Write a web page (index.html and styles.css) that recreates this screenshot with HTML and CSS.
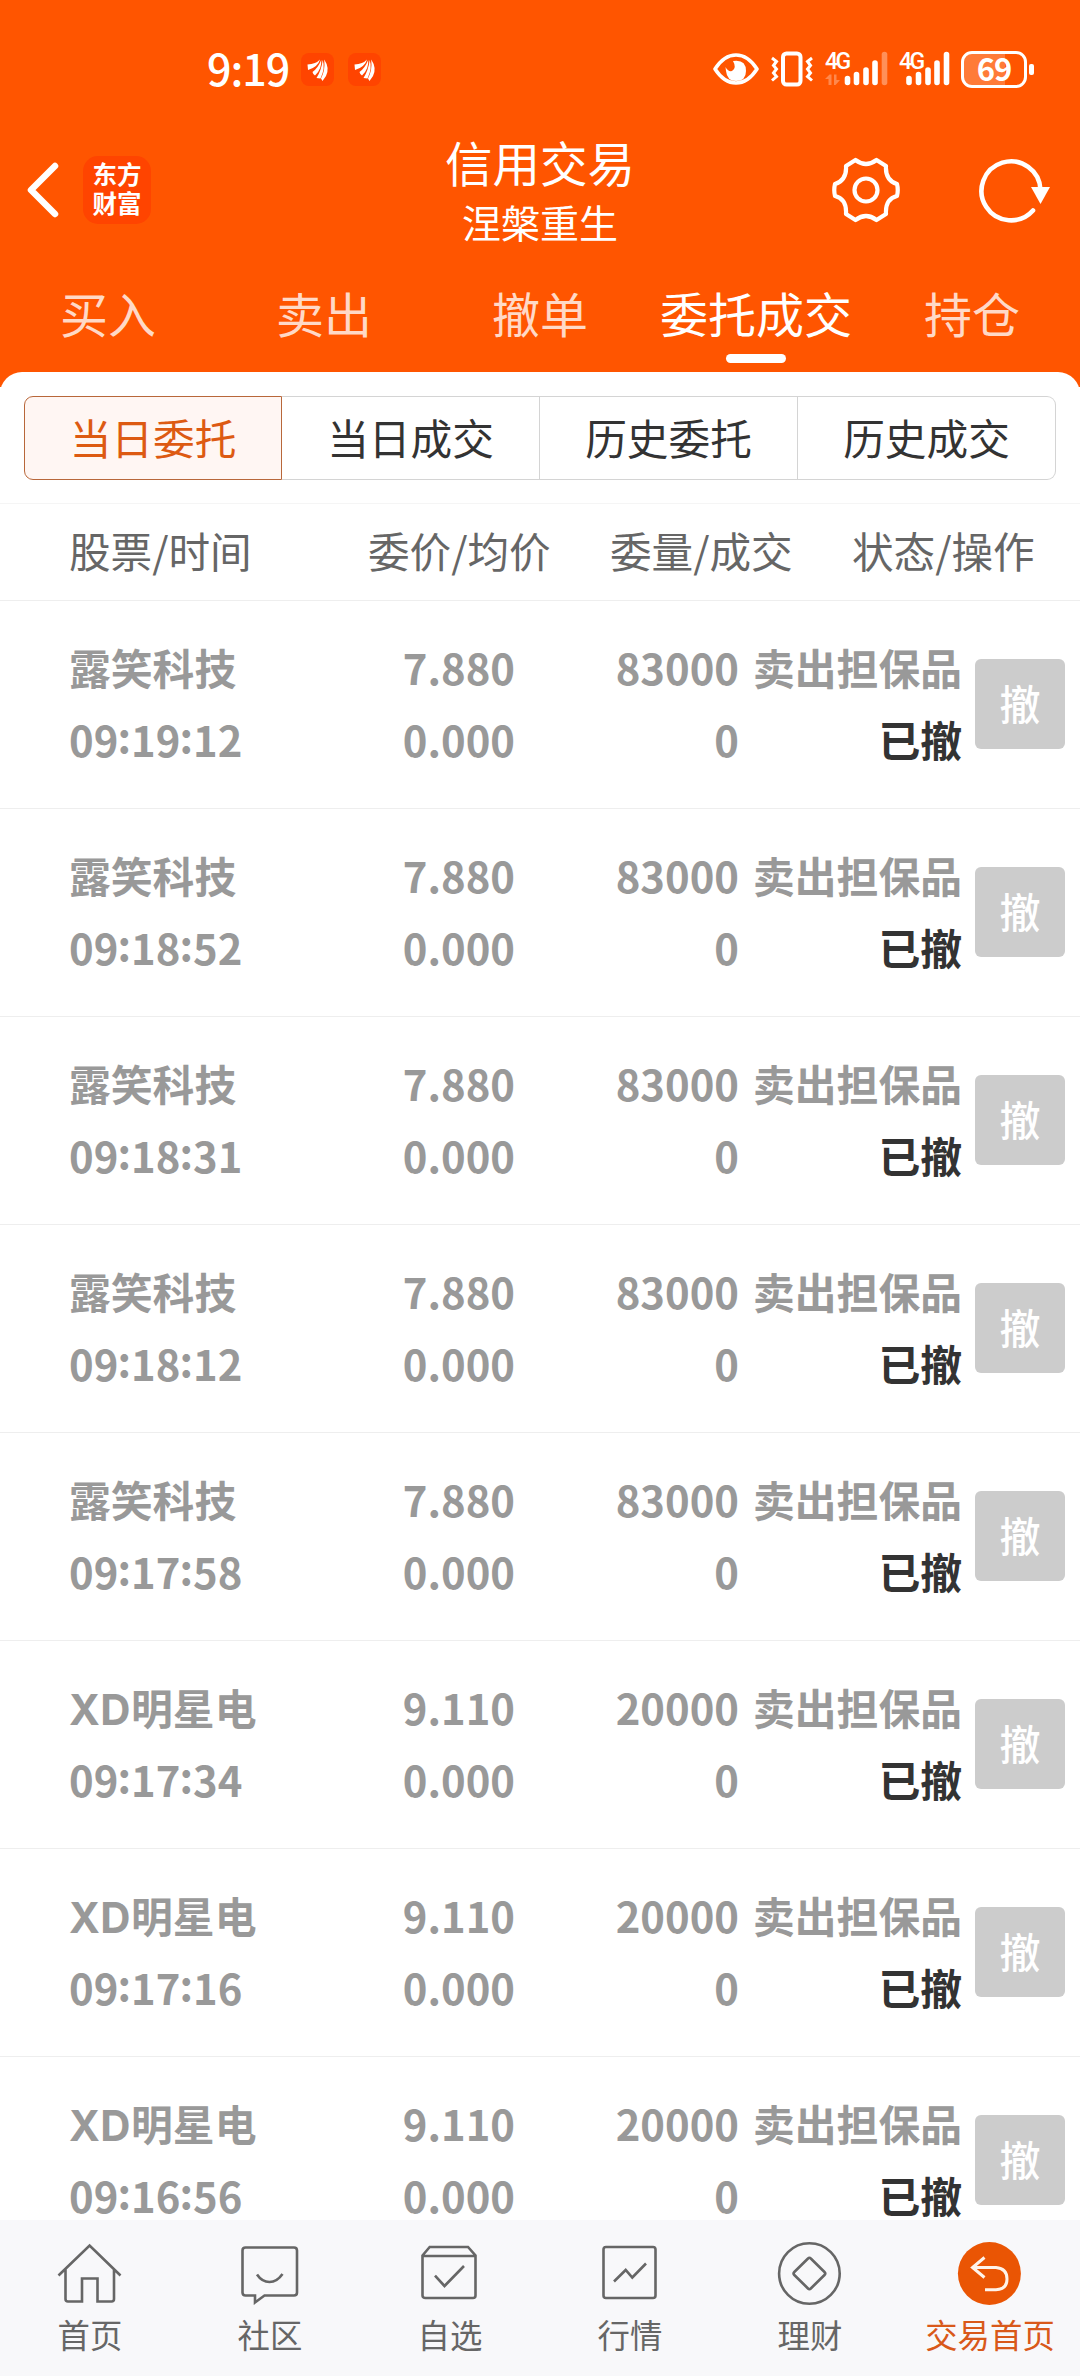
FILE: index.html
```html
<!DOCTYPE html>
<html lang="zh-CN">
<head>
    <meta charset="UTF-8">
    <meta name="viewport" content="width=device-width, initial-scale=1.0">
    <title>信用交易</title>
    <link rel="stylesheet" href="styles.css">
</head>
<body>
    <div class="app">
        <header class="header">
            <div class="status-bar">
                <div class="status-left">
                    <span class="clock">9:19</span>
                    <svg class="notice" width="33" height="33" viewBox="0 0 33 33">
                        <rect width="33" height="33" rx="8" fill="#ff4400"/>
                        <path d="M6.500 11.500Q15 11 19 6.500Q17 14 7 17ZM11.500 19Q17 15 20.200 7Q21 16 14 22.500Q12 21.500 11.500 19ZM15.500 25Q20.500 17 21.700 7Q24.500 15 19.500 25.500ZM23.200 6.500Q29 15 25 23L21.500 28L20 25.500Q24.500 17 23.200 6.500Z" fill="#fff"/>
                    </svg>
                    <svg class="notice" width="33" height="33" viewBox="0 0 33 33">
                        <rect width="33" height="33" rx="8" fill="#ff4400"/>
                        <path d="M6.500 11.500Q15 11 19 6.500Q17 14 7 17ZM11.500 19Q17 15 20.200 7Q21 16 14 22.500Q12 21.500 11.500 19ZM15.500 25Q20.500 17 21.700 7Q24.500 15 19.500 25.500ZM23.200 6.500Q29 15 25 23L21.500 28L20 25.500Q24.500 17 23.200 6.500Z" fill="#fff"/>
                    </svg>
                </div>
                <div class="status-right">
                    <svg class="eye" width="46" height="32" viewBox="0 0 46 32">
                        <path d="M2 16Q11 2 23 2T44 16Q35 30 23 30T2 16Z" fill="none" stroke="#fff" stroke-width="3.600" stroke-linejoin="round"/>
                        <path d="M20 8Q33 6 33 18Q33 28 23 28Q14 28 13 18L12.500 14Q15 19 19 18Q24 15 20 8Z" fill="#fff"/>
                    </svg>
                    <svg class="vibrate" width="42" height="36" viewBox="0 0 42 36" fill="none" stroke="#fff">
                        <rect x="12" y="2.500" width="17.500" height="31" rx="3.500" stroke-width="4"/>
                        <path d="M1 7L5.500 10.500L2.500 14.500L5.500 18L2.500 22L5.500 25.500L1 29.500M41 7L36.500 10.500L39.500 14.500L36.500 18L39.500 22L36.500 25.500L41 29.500" stroke-width="3"/>
                    </svg>
                    <div class="signal">
                        <span class="net">4G</span>
                        <svg width="64" height="36" viewBox="0 0 64 36" stroke="#fff" stroke-width="5.600" stroke-linecap="round">
                            <path d="M22.500 27.500V31.500M31.500 23.500V31.500M41 19V31.500M50 12V31.500"/>
                            <path d="M59.500 3.500V31.500" opacity=".35"/>
                            <path d="M0 28L4.500 23.500H6.500V34H3.500V28ZM9 23.500H11.500V29H15L10.500 34H9Z" fill="#fff" stroke="none" opacity=".3"/>
                        </svg>
                    </div>
                    <div class="signal">
                        <span class="net">4G</span>
                        <svg width="52" height="36" viewBox="0 0 52 36" stroke="#fff" stroke-width="5.600" stroke-linecap="round">
                            <path d="M10 27.500V31.500M19.500 23.500V31.500M29 19V31.500M38 12V31.500M47.500 3.500V31.500"/>
                        </svg>
                    </div>
                    <div class="battery"><span>69</span></div>
                    <div class="battery-cap"></div>
                </div>
            </div>

            <div class="title-bar">
                <div class="title-left">
                    <svg width="32" height="56" viewBox="0 0 32 56">
                        <path d="M28 4L4 28L28 52" fill="none" stroke="#fff" stroke-width="6.500" stroke-linecap="round" stroke-linejoin="round"/>
                    </svg>
                    <div class="brand">东方<br>财富</div>
                </div>
                <div class="title">
                    <h1>信用交易</h1>
                    <p>涅槃重生</p>
                </div>
                <div class="title-right">
                    <svg width="68" height="66" viewBox="0 0 68 66" fill="none" stroke="#fff" stroke-width="4.200" stroke-linejoin="round">
                        <path d="M23.500 3Q34 11 44.500 3L54 9Q53 23 65 27Q66.500 33 65 39Q53 42 54 57L44.500 63Q34 55 23.500 63L14 57Q15 42 3 39Q1.500 33 3 27Q15 23 14 9Z"/>
                        <circle cx="34" cy="33" r="11.500"/>
                    </svg>
                    <svg width="72" height="66" viewBox="0 0 72 66">
                        <path d="M61.500 33A29.500 29.500 0 1 0 54 53.500" fill="none" stroke="#fff" stroke-width="4.600" stroke-linecap="round"/>
                        <path d="M52 30H71L61.500 47Z" fill="#fff"/>
                    </svg>
                </div>
            </div>

            <nav class="tabs">
                <a class="tab">买入</a>
                <a class="tab">卖出</a>
                <a class="tab">撤单</a>
                <a class="tab active">委托成交</a>
                <a class="tab">持仓</a>
            </nav>
        </header>

        <main class="panel">
            <div class="segments">
                <div class="segment active">当日委托</div>
                <div class="segment">当日成交</div>
                <div class="segment">历史委托</div>
                <div class="segment">历史成交</div>
            </div>
            <div class="table-head">
                <span>股票/时间</span>
                <span>委价/均价</span>
                <span>委量/成交</span>
                <span>状态/操作</span>
            </div>
            <div id="orders" class="orders"></div>
        </main>

        <footer class="bottom-nav">
            <a class="nav-item">
                <svg class="nav-icon" viewBox="0 0 66 66">
                    <path d="M1.500 34.500L32.600 4.500L63.500 34.500M8.500 28V58Q8.500 60.500 11 60.500H25V37.500H40.500V60.500H54.500Q57 60.500 57 58V28"/>
                </svg>
                <span>首页</span>
            </a>
            <a class="nav-item">
                <svg class="nav-icon" viewBox="0 0 66 66">
                    <path d="M8.500 6.500H57Q60 6.500 60 9.500V51.500Q60 54.500 57 54.500H27.500L18 61.500V54.500H8.500Q5.500 54.500 5.500 51.500V9.500Q5.500 6.500 8.500 6.500ZM20 33.500Q25 41 32.500 41T45.500 33"/>
                </svg>
                <span>社区</span>
            </a>
            <a class="nav-item">
                <svg class="nav-icon" viewBox="0 0 66 66">
                    <path d="M5.500 14.500L12.700 6H51L58.500 14.500V54.500Q58.500 57 56 57H8.500Q5.500 57 5.500 54.500ZM5.500 15H58.500M18 34.600L27.500 45L47 25"/>
                </svg>
                <span>自选</span>
            </a>
            <a class="nav-item">
                <svg class="nav-icon" viewBox="0 0 66 66">
                    <rect x="6.500" y="6" width="52" height="51" rx="2.500"/>
                    <path d="M17 40.500L28.700 29L35.300 36.500L49 22.500"/>
                </svg>
                <span>行情</span>
            </a>
            <a class="nav-item">
                <svg class="nav-icon" viewBox="0 0 66 66">
                    <circle cx="32.400" cy="32.500" r="30.300"/>
                    <path d="M31 17.500Q32.400 16 33.800 17.500L47.500 31Q49 32.500 47.500 34L33.800 47.500Q32.400 49 31 47.500L17.300 34Q15.800 32.500 17.300 31Z"/>
                </svg>
                <span>理财</span>
            </a>
            <a class="nav-item active">
                <svg class="nav-icon" viewBox="0 0 66 66">
                    <circle class="disc" cx="32.400" cy="32.500" r="31.500"/>
                    <path d="M27.500 16.500L15.500 26.500L27.500 36.500M16 26.500H39Q50 27.500 50 38T39 48.700H28"/>
                </svg>
                <span>交易首页</span>
            </a>
        </footer>
    </div>

    <script>
        const orders = [
            { name: '露笑科技', time: '09:19:12', price: '7.880', qty: 83000 },
            { name: '露笑科技', time: '09:18:52', price: '7.880', qty: 83000 },
            { name: '露笑科技', time: '09:18:31', price: '7.880', qty: 83000 },
            { name: '露笑科技', time: '09:18:12', price: '7.880', qty: 83000 },
            { name: '露笑科技', time: '09:17:58', price: '7.880', qty: 83000 },
            { name: 'XD明星电', time: '09:17:34', price: '9.110', qty: 20000 },
            { name: 'XD明星电', time: '09:17:16', price: '9.110', qty: 20000 },
            { name: 'XD明星电', time: '09:16:56', price: '9.110', qty: 20000 }
        ];

        document.getElementById('orders').innerHTML = orders.map(o => `
            <div class="order">
                <div class="col stock"><span>${o.name.replace('XD', '<b class="xd">XD</b>')}</span><span class="time">${o.time.replace(/:/g, '<i>:</i>')}</span></div>
                <div class="col price"><span>${o.price}</span><span>0.000</span></div>
                <div class="col qty"><span>${o.qty}</span><span>0</span></div>
                <div class="col state"><span>卖出担保品</span><span class="done">已撤</span></div>
                <button class="cancel">撤</button>
            </div>`).join('');
    </script>
</body>
</html>
```

FILE: styles.css
```css
* {
    box-sizing: border-box;
}
body {
    margin: 0;
    background-color: #fff;
    font-family: "Noto Sans CJK SC", sans-serif;
}
h1, p {
    margin: 0;
    font-weight: 400;
}
svg {
    display: block;
    flex: none;
}
.app {
    display: flex;
    flex-direction: column;
    width: 1080px;
    height: 2376px;
    overflow: hidden;
}

/* header */
.header {
    flex: none;
    height: 387px;
    background-color: #ff5500;
    color: #fff;
}
.status-bar {
    display: flex;
    justify-content: space-between;
    height: 133px;
    padding: 0 47px 0 207px;
}
.status-left, .status-right {
    display: flex;
    align-items: center;
    height: 138px;
}
.clock {
    width: 94px;
    padding-bottom: 4px;
    font-size: 43px;
    line-height: 60px;
    font-weight: 500;
    letter-spacing: -1px;
}
.notice {
    margin-right: 14px;
}
.eye {
    margin-right: 12px;
}
.vibrate {
    margin-right: 12px;
}
.signal {
    position: relative;
    margin-right: 10px;
}
.net {
    position: absolute;
    left: 0;
    top: -3px;
    font-family: Roboto, sans-serif;
    font-size: 23px;
    font-weight: 500;
    line-height: 27px;
    letter-spacing: -2.5px;
}
.battery {
    width: 66px;
    height: 37px;
    border: 3px solid #fff;
    border-radius: 11px;
    background: linear-gradient(90deg, #ff7b38 41px, transparent 41px);
    text-align: center;
    font-size: 31px;
    font-weight: 700;
    line-height: 27px;
    letter-spacing: -1px;
}
.battery-cap {
    width: 5px;
    height: 11px;
    margin-left: 2px;
    margin-right: -1px;
    border-radius: 2px;
    background-color: #fff;
}
.title-bar {
    display: flex;
    height: 117px;
}
.title-left, .title-right {
    display: flex;
    align-items: center;
    width: 360px;
    height: 114px;
}
.title-left {
    padding-left: 27px;
}
.brand {
    width: 68px;
    height: 68px;
    margin-left: 24px;
    padding-top: 3px;
    border-radius: 15px;
    background-color: #ff4400;
    text-align: center;
    font-size: 24.5px;
    font-weight: 700;
    line-height: 29px;
}
.title {
    width: 360px;
    text-align: center;
}
.title h1 {
    font-size: 47.5px;
    line-height: 57px;
}
.title p {
    margin-top: 3px;
    font-size: 39px;
    line-height: 56px;
}
.title-right {
    justify-content: flex-end;
    gap: 79px;
    padding-right: 29px;
}
.tabs {
    display: flex;
    padding-top: 23px;
}
.tab {
    display: flex;
    flex-direction: column;
    align-items: center;
    width: 216px;
    color: rgba(255, 255, 255, 0.78);
    font-size: 48px;
    line-height: 79px;
}
.tab.active {
    color: #fff;
}
.tab.active::after {
    content: "";
    width: 60px;
    height: 9px;
    margin-top: 2px;
    border-radius: 4.5px;
    background-color: #fff;
}

/* order list */
.panel {
    flex: 1;
    min-height: 0;
    margin-top: -15px;
    border-radius: 22px 22px 0 0;
    background-color: #fff;
    overflow: hidden;
}
.segments {
    display: flex;
    margin: 24px 24px 23px;
}
.segment {
    width: 258px;
    height: 84px;
    border: 1px solid #d4d4d4;
    border-left-width: 0;
    color: #333;
    text-align: center;
    font-size: 41.7px;
    line-height: 80px;
}
.segment:last-child {
    border-radius: 0 9px 9px 0;
}
.segment.active {
    border: 1px solid #b8673a;
    border-radius: 9px 0 0 9px;
    background-color: #fff6f3;
    color: #dd5a12;
}
.table-head {
    display: flex;
    height: 98px;
    padding-left: 69px;
    border-top: 1px solid #f5f5f5;
    border-bottom: 1px solid #eee;
    color: #666;
    font-size: 41.6px;
    line-height: 93px;
}
.table-head span {
    flex: none;
    width: 242px;
}
.table-head span:first-child {
    width: 299px;
}
.table-head span:last-child {
    width: 200px;
}
.order {
    display: flex;
    align-items: flex-start;
    height: 208px;
    padding: 30px 15px 0 69px;
    border-bottom: 1px solid #eee;
    color: #999;
    font-size: 41.8px;
    font-weight: 700;
    line-height: 72px;
    white-space: nowrap;
}
.col {
    display: flex;
    flex-direction: column;
}
.col span {
    height: 72px;
}
.stock {
    width: 245px;
}
.xd {
    font-family: Inter, sans-serif;
    font-weight: 700;
    letter-spacing: 0.5px;
}
.time {
    letter-spacing: 0.1px;
}
.time i {
    display: inline-block;
    width: 12.5px;
    font-style: normal;
    text-indent: -1px;
    transform: translateY(-4px);
}
.price {
    width: 201px;
    align-items: flex-end;
}
.qty {
    width: 224px;
    align-items: flex-end;
}
.state {
    width: 223px;
    align-items: flex-end;
}
.done {
    color: #333;
}
.cancel {
    width: 90px;
    height: 90px;
    margin: 28px 0 0 13px;
    padding: 0 0 4px;
    border: none;
    border-radius: 6px;
    background-color: #ccc;
    color: #fff;
    font-family: inherit;
    font-size: 41px;
    font-weight: 500;
    line-height: 86px;
}

/* bottom navigation */
.bottom-nav {
    display: flex;
    flex: none;
    height: 156px;
    background-color: #f8f8fa;
}
.nav-item {
    display: flex;
    flex-direction: column;
    align-items: center;
    width: 180px;
    padding-top: 21px;
    color: #666;
    font-size: 32.4px;
    line-height: 53px;
}
.nav-icon {
    width: 66px;
    height: 66px;
    fill: none;
    stroke: #666;
    stroke-width: 2.6;
}
.nav-item.active {
    color: #d9591a;
}
.nav-item.active .nav-icon {
    stroke: #fff3ea;
    stroke-width: 3;
}
.disc {
    fill: #ea5504;
    stroke: none;
}
```
